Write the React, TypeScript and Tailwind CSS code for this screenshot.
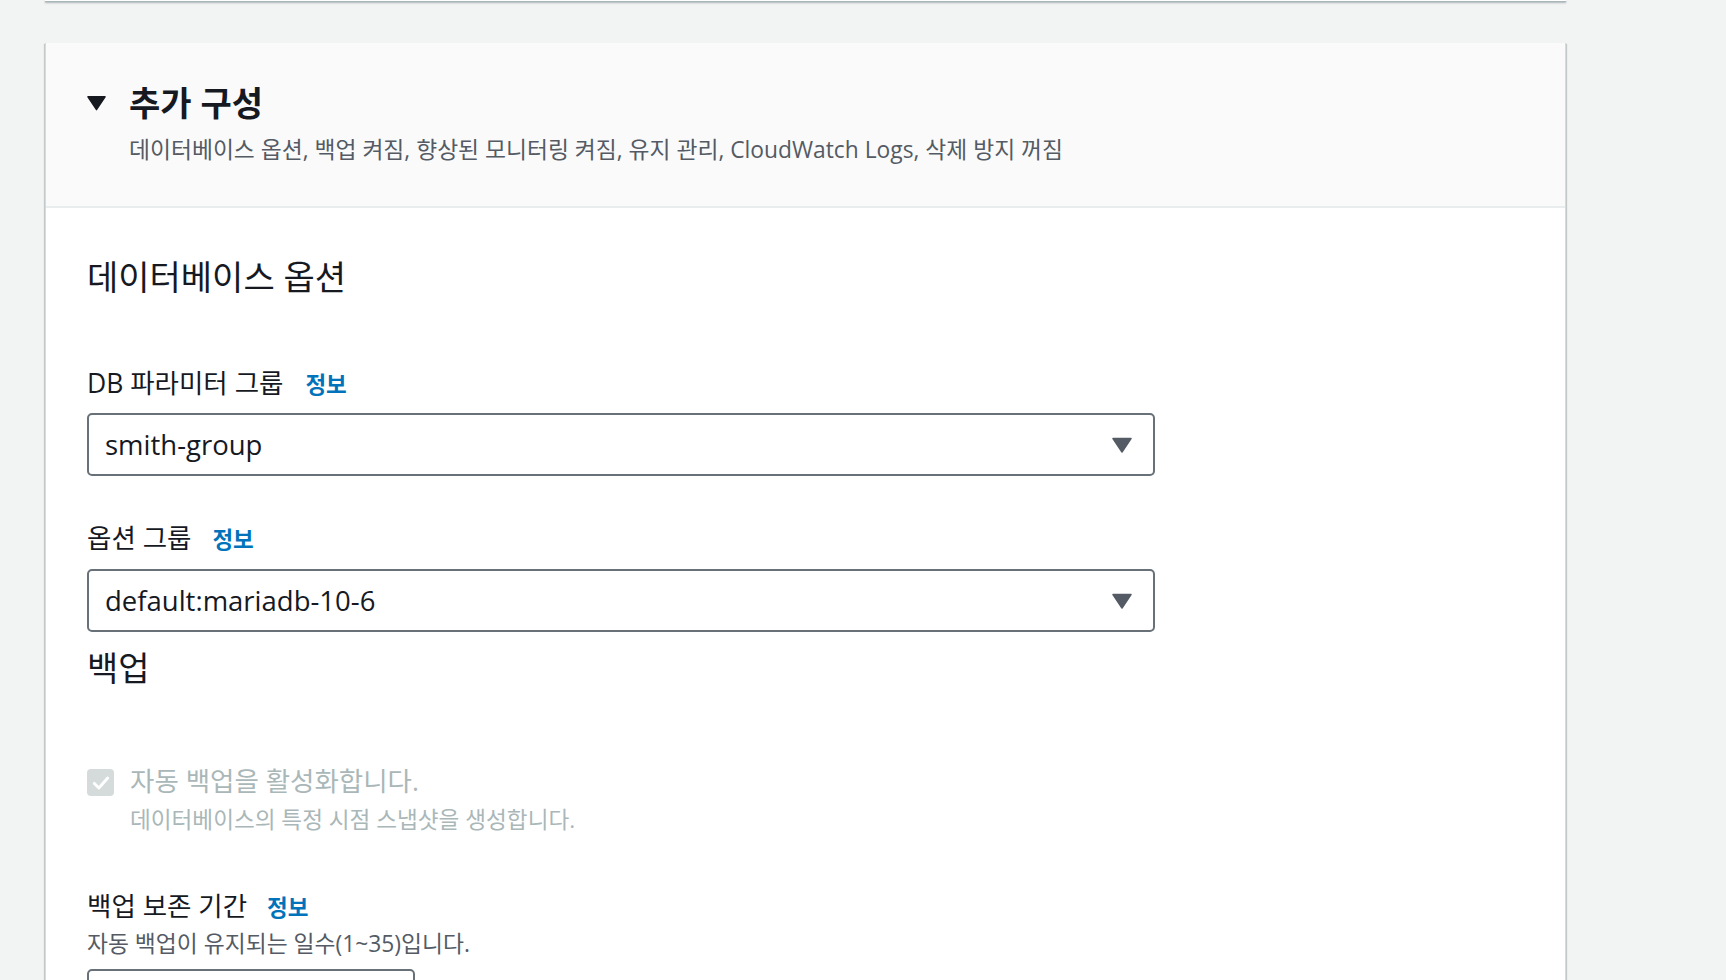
import { ReactNode } from "react";

const font = "font-['Open_Sans','Noto_Sans_CJK_KR',sans-serif]";

function Caret({ className }: { className?: string }) {
  return (
    <svg viewBox="0 0 20 16" className={className}>
      <path d="M1 1.5 H19 L10 15 Z" fill="currentColor" stroke="currentColor" strokeWidth="1.5" strokeLinejoin="round" />
    </svg>
  );
}

function Label({ children, gap }: { children: ReactNode; gap: string }) {
  return (
    <div className="flex items-baseline h-[30px] leading-[30px]">
      <span className="text-[26.5px] text-[#16191f]">{children}</span>
      <a className={`${gap} text-[22.5px] font-bold text-[#0073bb]`}>정보</a>
    </div>
  );
}

function Select({ value, className }: { value: string; className?: string }) {
  return (
    <div
      className={`flex items-center justify-between w-[1068px] h-[63px] border-2 border-[#687078] rounded-[5px] pl-[16px] pr-[21px] bg-white ${className}`}
    >
      <span className="text-[27.5px] text-[#16191f]">{value}</span>
      <Caret className="w-[20px] h-[16px] text-[#545b64]" />
    </div>
  );
}

export default function App() {
  return (
    <div className={`min-h-screen bg-[#f2f3f3] ${font} overflow-hidden`}>
      <div className="ml-[45px] w-[1521px]">
        <div className="h-[2px] bg-white border-b border-[#aab7b8] shadow-[0_1px_2px_rgba(0,28,36,0.3)]" />

        <div className="mt-[41px] bg-white border-x border-[#d5dbdb] shadow-[0_1px_1px_rgba(0,28,36,0.3),1px_1px_1px_rgba(0,28,36,0.15),-1px_1px_1px_rgba(0,28,36,0.15)]">
          <div className="bg-[#fafafa] border-b-2 border-[#eaeded] pt-[40px] pb-[42px] pl-[41px]">
            <div className="flex items-center h-[40px]">
              <Caret className="w-[19px] h-[16px] text-[#16191f]" />
              <h2 className="ml-[23px] text-[34px] leading-[40px] font-bold text-[#16191f]">추가 구성</h2>
            </div>
            <p className="mt-[13px] ml-[42px] text-[22.8px] leading-[28px] text-[#545b64]">
              데이터베이스 옵션, 백업 켜짐, 향상된 모니터링 켜짐, 유지 관리, CloudWatch Logs, 삭제 방지 꺼짐
            </p>
          </div>

          <div className="pl-[41px] pt-[49px] pb-[60px]">
            <h3 className="text-[34px] leading-[40px] text-[#16191f]">데이터베이스 옵션</h3>

            <div className="mt-[71px]">
              <Label gap="ml-[22px]">DB 파라미터 그룹</Label>
            </div>
            <Select value="smith-group" className="mt-[15px]" />

            <div className="mt-[47px]">
              <Label gap="ml-[21px]">옵션 그룹</Label>
            </div>
            <Select value="default:mariadb-10-6" className="mt-[16px]" />

            <h3 className="mt-[16px] text-[34px] leading-[40px] text-[#16191f]">백업</h3>

            <div className="mt-[78px] flex items-start">
              <div className="mt-[3px] w-[27px] h-[27px] rounded-[4px] bg-[#d5dbdb] flex items-center justify-center">
                <svg viewBox="0 0 24 24" className="w-[20px] h-[20px]">
                  <path d="M4 12.5 L9.5 18 L20 6" fill="none" stroke="white" strokeWidth="3.5" strokeLinecap="round" strokeLinejoin="round" />
                </svg>
              </div>
              <span className="ml-[16px] text-[26.5px] leading-[30px] text-[#aab7b8]">자동 백업을 활성화합니다.</span>
            </div>
            <p className="mt-[11px] ml-[43px] text-[22.6px] leading-[26px] text-[#aab7b8]">
              데이터베이스의 특정 시점 스냅샷을 생성합니다.
            </p>

            <div className="mt-[58px]">
              <Label gap="ml-[20px]">백업 보존 기간</Label>
            </div>
            <p className="mt-[10px] text-[22.8px] leading-[26px] text-[#545b64]">자동 백업이 유지되는 일수(1~35)입니다.</p>
            <div className="mt-[12px] w-[328px] h-[63px] border-2 border-[#687078] rounded-[5px] bg-white" />
          </div>
        </div>
      </div>
    </div>
  );
}
